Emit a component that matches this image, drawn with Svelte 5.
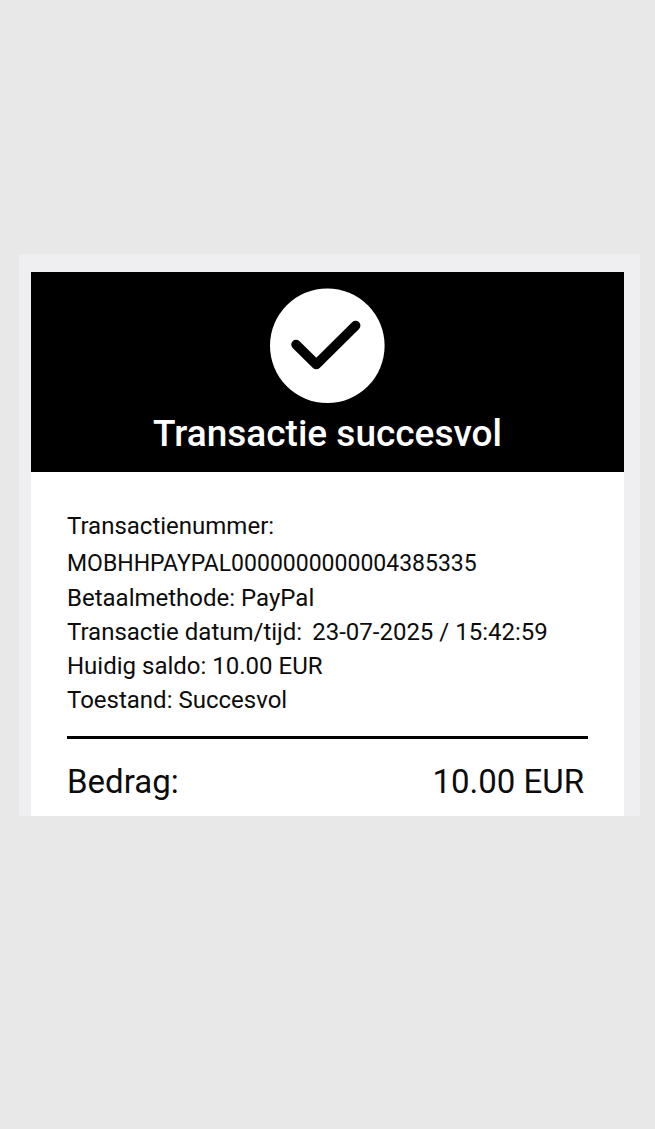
<script lang="ts">
  interface Detail {
    label: string;
    value: string;
    stacked?: boolean;
    wide?: boolean;
  }

  const details: Detail[] = [
    { label: 'Transactienummer:', value: 'MOBHHPAYPAL0000000000004385335', stacked: true },
    { label: 'Betaalmethode:', value: 'PayPal' },
    { label: 'Transactie datum/tijd:', value: '23-07-2025 / 15:42:59', wide: true },
    { label: 'Huidig saldo:', value: '10.00 EUR' },
    { label: 'Toestand:', value: 'Succesvol' },
  ];
</script>

<main class="page">
  <article class="frame">
    <header class="status">
      <svg class="check" viewBox="0 0 116 116" aria-hidden="true">
        <circle cx="57.3" cy="57.7" r="57.3" fill="#fff" />
        <path d="M26 56.5L46.3 76.5L85.7 37.5" fill="none" stroke="#000" stroke-width="9.5" stroke-linecap="round" stroke-linejoin="round" />
      </svg>
      <h1>Transactie succesvol</h1>
    </header>

    <section class="receipt">
      <dl class="details">
        {#each details as { label, value, stacked, wide }}
          <div class="row" class:stacked class:wide>
            <dt>{label}</dt>
            <dd>{value}</dd>
          </div>
        {/each}
      </dl>
      <hr />
      <dl class="total">
        <dt>Bedrag:</dt>
        <dd>10.00 EUR</dd>
      </dl>
    </section>
  </article>
</main>

<style>
  :global(body) {
    margin: 0;
    background: #e8e8e8;
  }
  .page {
    padding: 254px 15px 48px 19px;
    font-family: Roboto, 'Liberation Sans', sans-serif;
    color: #0c0c0c;
  }
  .frame {
    padding: 18px 16px 0 12px;
    background: #efeff1;
  }
  .status {
    display: flex;
    flex-direction: column;
    align-items: center;
    padding: 16px;
    background: #000;
    color: #fff;
  }
  .check {
    width: 116px;
    height: 116px;
  }
  h1 {
    margin: 8px 0 0;
    font-size: 37px;
    font-weight: 500;
    line-height: 44px;
    text-align: center;
  }
  .receipt {
    padding: 37px 36px 12px;
    background: #fff;
  }
  dl,
  dd {
    margin: 0;
  }
  .details {
    font-size: 24px;
    line-height: 34px;
  }
  .row {
    display: flex;
    flex-wrap: wrap;
    column-gap: 6px;
  }
  .row.stacked {
    flex-direction: column;
    row-gap: 4px;
    overflow-wrap: anywhere;
  }
  .row.stacked dd {
    font-size: 23px;
  }
  .row.wide {
    column-gap: 10px;
  }
  hr {
    height: 3px;
    margin: 19px 0 20px;
    border: 0;
    background: #000;
  }
  .total {
    display: flex;
    justify-content: space-between;
    padding-right: 4px;
    font-size: 33px;
    line-height: 45px;
  }
</style>
